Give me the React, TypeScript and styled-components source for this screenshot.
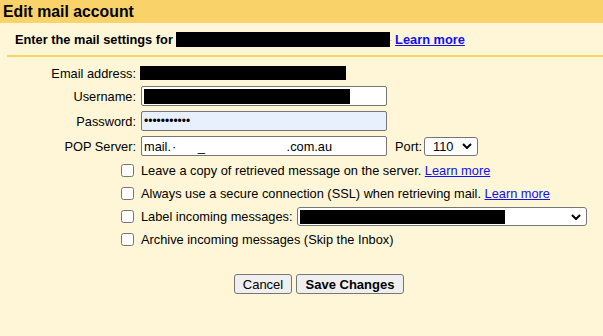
import React from "react";
import styled, { createGlobalStyle } from "styled-components";

const Global = createGlobalStyle`
  html, body { margin: 0; padding: 0; }
  body {
    background: #fff6d8;
    font-family: "Liberation Sans", Arial, sans-serif;
    font-size: 12.8px;
    color: #000;
  }
`;

const Page = styled.div`
  width: 603px;
  height: 336px;
  background: #fff6d8;
  overflow: hidden;
`;

const TitleBar = styled.div`
  height: 23px;
  background: #f9d26a;
  padding-left: 3px;
  font-size: 15.8px;
  font-weight: bold;
  line-height: 23px;
`;

const Intro = styled.div`
  height: 32px;
  padding-left: 15px;
  display: flex;
  align-items: center;
  font-weight: bold;
  white-space: nowrap;
`;

const Redact = styled.span<{ $w: number; $h: number }>`
  display: inline-block;
  flex: none;
  width: ${(p) => p.$w}px;
  height: ${(p) => p.$h}px;
  background: #000;
  vertical-align: middle;
`;

const Link = styled.a<{ $bold?: boolean }>`
  color: #1010f0;
  text-decoration: underline;
  font-weight: ${(p) => (p.$bold ? "bold" : "normal")};
  cursor: pointer;
`;

const Rule = styled.div`
  margin-left: 7px;
  height: 2px;
  background: #f9d26a;
`;

const Form = styled.div`
  margin-top: 8px;
  display: grid;
  grid-template-columns: 136px auto;
  column-gap: 5px;
  row-gap: 5px;
  align-items: center;
`;

const Label = styled.label`
  text-align: right;
  white-space: nowrap;
`;

const Field = styled.div`
  display: flex;
  align-items: center;
  min-height: 16px;
`;

const TextBox = styled.div<{ $bg?: string }>`
  box-sizing: border-box;
  width: 246px;
  height: 20px;
  border: 1px solid #767676;
  border-radius: 2px;
  background: ${(p) => p.$bg || "#fff"};
  padding: 0 2px;
  display: flex;
  align-items: center;
  white-space: pre;
  overflow: hidden;
`;

const Dots = styled.span`
  font-size: 12px;
  line-height: 1;
`;

const PortLabel = styled.span`
  margin-left: 8px;
  margin-right: 2px;
`;

const SelectBox = styled.div<{ $w: number }>`
  box-sizing: border-box;
  width: ${(p) => p.$w}px;
  height: 19px;
  border: 1px solid #767676;
  border-radius: 3px;
  background: #fff;
  display: flex;
  align-items: center;
  padding: 0 5px 0 2px;
  gap: 4px;
`;

const SelectValue = styled.span`
  flex: 1;
  display: flex;
  align-items: center;
  padding-left: 6px;
`;

const Options = styled.div`
  margin-top: 5px;
  padding-left: 121px;
  display: flex;
  flex-direction: column;
  gap: 4px;
`;

const OptionRow = styled.div`
  height: 19px;
  display: flex;
  align-items: center;
  white-space: nowrap;
`;

const Check = styled.input.attrs({ type: "checkbox" })`
  width: 13px;
  height: 13px;
  margin: 0 7px 0 0;
`;

const Buttons = styled.div`
  margin-top: 25px;
  padding-left: 234px;
  display: flex;
  gap: 4px;
`;

const Button = styled.button<{ $w: number; $primary?: boolean }>`
  box-sizing: border-box;
  width: ${(p) => p.$w}px;
  height: 20px;
  padding: 0;
  border: 1px solid #767676;
  border-radius: 3px;
  background: #efefef;
  font-family: "Liberation Sans", Arial, sans-serif;
  font-size: 13px;
  font-weight: ${(p) => (p.$primary ? "bold" : "normal")};
  color: #000;
`;

const Chevron = () => (
  <svg width="10" height="6" viewBox="0 0 10 6">
    <path d="M1 1 L5 5 L9 1" fill="none" stroke="#000" strokeWidth="2" />
  </svg>
);

export default function App() {
  return (
    <Page>
      <Global />
      <TitleBar>Edit mail account</TitleBar>
      <Intro>
        Enter the mail settings for&nbsp;
        <Redact $w={214} $h={15} />
        <span style={{ fontSize: 4 }}>.</span>&nbsp;
        <Link $bold>Learn more</Link>
      </Intro>
      <Rule />
      <Form>
        <Label>Email address:</Label>
        <Field>
          <Redact $w={206} $h={14} style={{ marginLeft: -1 }} />
        </Field>
        <Label>Username:</Label>
        <Field>
          <TextBox>
            <Redact $w={206} $h={15} />
          </TextBox>
        </Field>
        <Label>Password:</Label>
        <Field>
          <TextBox $bg="#e8f0fe">
            <Dots>•••••••••••</Dots>
          </TextBox>
        </Field>
        <Label>POP Server:</Label>
        <Field>
          <TextBox>{"mail.\u200a\u00b7      _                       .com.au"}</TextBox>
          <PortLabel>Port:</PortLabel>
          <SelectBox $w={54}>
            <SelectValue>110</SelectValue>
            <Chevron />
          </SelectBox>
        </Field>
      </Form>
      <Options>
        <OptionRow>
          <Check />
          Leave a copy of retrieved message on the server.&nbsp;<Link>Learn more</Link>
        </OptionRow>
        <OptionRow>
          <Check />
          Always use a secure connection (SSL) when retrieving mail.&nbsp;<Link>Learn more</Link>
        </OptionRow>
        <OptionRow>
          <Check />
          Label incoming messages:&nbsp;
          <SelectBox $w={290} style={{ marginLeft: 1 }}>
            <Redact $w={205} $h={14} />
            <span style={{ flex: 1 }} />
            <Chevron />
          </SelectBox>
        </OptionRow>
        <OptionRow>
          <Check />
          Archive incoming messages (Skip the Inbox)
        </OptionRow>
      </Options>
      <Buttons>
        <Button $w={58}>Cancel</Button>
        <Button $w={108} $primary>
          Save Changes
        </Button>
      </Buttons>
    </Page>
  );
}
